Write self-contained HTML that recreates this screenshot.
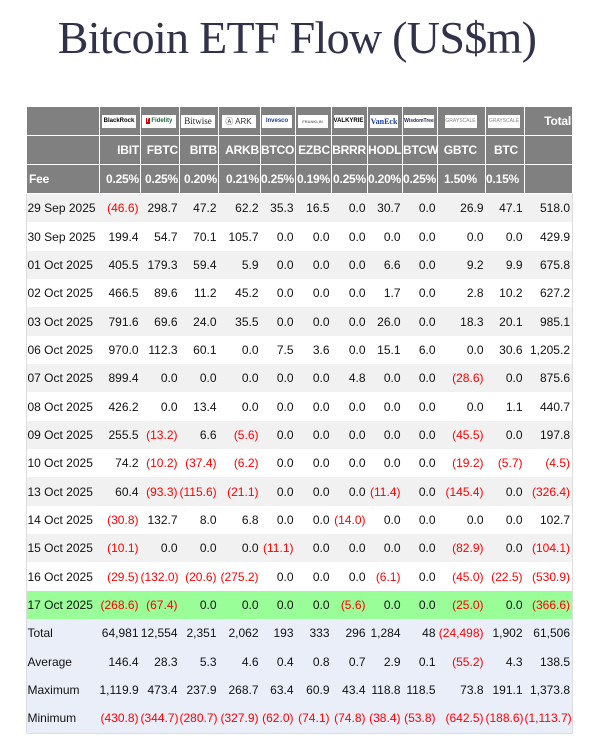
<!DOCTYPE html>
<html><head><meta charset="utf-8"><style>
body{margin:0;background:#fff;width:612px;height:750px;overflow:hidden;position:relative;font-family:"Liberation Sans",Arial,sans-serif}
h1{position:absolute;left:-9px;width:612px;top:12px;margin:0;text-align:center;font:46px/52px "Liberation Serif",serif;color:#30324a;letter-spacing:-0.7px}
table{position:absolute;left:26px;top:106px;border-collapse:collapse;table-layout:fixed;width:546px;font-size:12px;color:#111}
td{padding:0 2px 0 0;text-align:right;white-space:nowrap;overflow:hidden}
tr.h td{background:#808080;color:#fff;font-weight:bold;font-size:12px;letter-spacing:-0.2px;border:1px solid #fff;text-align:right;padding-right:1px;overflow:visible}
tr.h1 td{height:28px}
tr.h2 td,tr.h3 td{height:28px}
tr.h td:first-child{text-align:left;padding-left:2px}
tr.d td{height:28.35px}
tr.d td:first-child{text-align:left;padding-left:1px}
tr.g td{background:#f1f1f1}
tr.w td{background:#fff}
tr.gr td{background:#99fd98}
tr.s td{background:#e9eef8}
td:last-child{border-right:1px solid #ddd}
.n{color:#f00}
.lg{display:inline-block;background:#fff;color:#333;font-size:6px;font-weight:bold;width:34px;height:13px;line-height:13px;text-align:center;vertical-align:middle;margin-right:2px;letter-spacing:0;overflow:hidden}
tr.h1 td.c{text-align:center;padding:0}
.bot td{border-bottom:1px solid #ddd}
</style></head><body>
<h1>Bitcoin ETF Flow (US$m)</h1>
<table>
<colgroup><col style="width:73px"><col style="width:41px"><col style="width:39px"><col style="width:39px"><col style="width:42px"><col style="width:35px"><col style="width:36px"><col style="width:36px"><col style="width:35px"><col style="width:35px"><col style="width:48px"><col style="width:39px"><col style="width:48px"></colgroup>
<tr class="h h1"><td></td><td class="c"><span class="lg" style="color:#000">BlackRock</span></td><td class="c"><span class="lg" style="color:#1a6a3a"><b style="background:#c00;color:#fff;padding:0 1px">f</b> Fidelity</span></td><td class="c"><span class="lg" style="font-family:'Liberation Serif';font-size:9px;font-weight:normal;color:#222">Bitwise</span></td><td class="c"><span class="lg" style="font-size:8px;font-weight:normal">Ⓐ ARK</span></td><td class="c"><span class="lg" style="color:#1c3f94;width:30px">Invesco</span></td><td class="c"><span class="lg" style="width:30px;color:#777;font-size:4px">FRANKLIN</span></td><td class="c"><span class="lg" style="width:30px;color:#000">VALKYRIE</span></td><td class="c"><span class="lg" style="width:28px;color:#1c3f94;font-family:'Liberation Serif';font-size:8px">VanEck</span></td><td class="c"><span class="lg" style="width:30px;color:#2b2a5a;font-size:5px">WisdomTree</span></td><td class="c"><span class="lg" style="width:32px;color:#888;font-size:5px;font-weight:normal">GRAYSCALE</span></td><td class="c"><span class="lg" style="width:32px;color:#888;font-size:5px;font-weight:normal">GRAYSCALE</span></td><td>Total</td></tr>
<tr class="h h2"><td></td><td>IBIT</td><td>FBTC</td><td>BITB</td><td>ARKB</td><td>BTCO</td><td>EZBC</td><td>BRRR</td><td>HODL</td><td>BTCW</td><td style="padding-right:8px">GBTC</td><td style="padding-right:6px">BTC</td><td></td></tr>
<tr class="h h3"><td>Fee</td><td>0.25%</td><td>0.25%</td><td>0.20%</td><td>0.21%</td><td>0.25%</td><td>0.19%</td><td>0.25%</td><td>0.20%</td><td>0.25%</td><td style="padding-right:8px">1.50%</td><td style="padding-right:6px">0.15%</td><td></td></tr>
<tr class="d g"><td>29 Sep 2025</td><td class="n">(46.6)</td><td>298.7</td><td>47.2</td><td>62.2</td><td>35.3</td><td>16.5</td><td>0.0</td><td>30.7</td><td>0.0</td><td>26.9</td><td>47.1</td><td>518.0</td></tr>
<tr class="d w"><td>30 Sep 2025</td><td>199.4</td><td>54.7</td><td>70.1</td><td>105.7</td><td>0.0</td><td>0.0</td><td>0.0</td><td>0.0</td><td>0.0</td><td>0.0</td><td>0.0</td><td>429.9</td></tr>
<tr class="d g"><td>01 Oct 2025</td><td>405.5</td><td>179.3</td><td>59.4</td><td>5.9</td><td>0.0</td><td>0.0</td><td>0.0</td><td>6.6</td><td>0.0</td><td>9.2</td><td>9.9</td><td>675.8</td></tr>
<tr class="d w"><td>02 Oct 2025</td><td>466.5</td><td>89.6</td><td>11.2</td><td>45.2</td><td>0.0</td><td>0.0</td><td>0.0</td><td>1.7</td><td>0.0</td><td>2.8</td><td>10.2</td><td>627.2</td></tr>
<tr class="d g"><td>03 Oct 2025</td><td>791.6</td><td>69.6</td><td>24.0</td><td>35.5</td><td>0.0</td><td>0.0</td><td>0.0</td><td>26.0</td><td>0.0</td><td>18.3</td><td>20.1</td><td>985.1</td></tr>
<tr class="d w"><td>06 Oct 2025</td><td>970.0</td><td>112.3</td><td>60.1</td><td>0.0</td><td>7.5</td><td>3.6</td><td>0.0</td><td>15.1</td><td>6.0</td><td>0.0</td><td>30.6</td><td>1,205.2</td></tr>
<tr class="d g"><td>07 Oct 2025</td><td>899.4</td><td>0.0</td><td>0.0</td><td>0.0</td><td>0.0</td><td>0.0</td><td>4.8</td><td>0.0</td><td>0.0</td><td class="n">(28.6)</td><td>0.0</td><td>875.6</td></tr>
<tr class="d w"><td>08 Oct 2025</td><td>426.2</td><td>0.0</td><td>13.4</td><td>0.0</td><td>0.0</td><td>0.0</td><td>0.0</td><td>0.0</td><td>0.0</td><td>0.0</td><td>1.1</td><td>440.7</td></tr>
<tr class="d g"><td>09 Oct 2025</td><td>255.5</td><td class="n">(13.2)</td><td>6.6</td><td class="n">(5.6)</td><td>0.0</td><td>0.0</td><td>0.0</td><td>0.0</td><td>0.0</td><td class="n">(45.5)</td><td>0.0</td><td>197.8</td></tr>
<tr class="d w"><td>10 Oct 2025</td><td>74.2</td><td class="n">(10.2)</td><td class="n">(37.4)</td><td class="n">(6.2)</td><td>0.0</td><td>0.0</td><td>0.0</td><td>0.0</td><td>0.0</td><td class="n">(19.2)</td><td class="n">(5.7)</td><td class="n">(4.5)</td></tr>
<tr class="d g"><td>13 Oct 2025</td><td>60.4</td><td class="n">(93.3)</td><td class="n">(115.6)</td><td class="n">(21.1)</td><td>0.0</td><td>0.0</td><td>0.0</td><td class="n">(11.4)</td><td>0.0</td><td class="n">(145.4)</td><td>0.0</td><td class="n">(326.4)</td></tr>
<tr class="d w"><td>14 Oct 2025</td><td class="n">(30.8)</td><td>132.7</td><td>8.0</td><td>6.8</td><td>0.0</td><td>0.0</td><td class="n">(14.0)</td><td>0.0</td><td>0.0</td><td>0.0</td><td>0.0</td><td>102.7</td></tr>
<tr class="d g"><td>15 Oct 2025</td><td class="n">(10.1)</td><td>0.0</td><td>0.0</td><td>0.0</td><td class="n">(11.1)</td><td>0.0</td><td>0.0</td><td>0.0</td><td>0.0</td><td class="n">(82.9)</td><td>0.0</td><td class="n">(104.1)</td></tr>
<tr class="d w"><td>16 Oct 2025</td><td class="n">(29.5)</td><td class="n">(132.0)</td><td class="n">(20.6)</td><td class="n">(275.2)</td><td>0.0</td><td>0.0</td><td>0.0</td><td class="n">(6.1)</td><td>0.0</td><td class="n">(45.0)</td><td class="n">(22.5)</td><td class="n">(530.9)</td></tr>
<tr class="d gr"><td>17 Oct 2025</td><td class="n">(268.6)</td><td class="n">(67.4)</td><td>0.0</td><td>0.0</td><td>0.0</td><td>0.0</td><td class="n">(5.6)</td><td>0.0</td><td>0.0</td><td class="n">(25.0)</td><td>0.0</td><td class="n">(366.6)</td></tr>
<tr class="d s"><td>Total</td><td>64,981</td><td>12,554</td><td>2,351</td><td>2,062</td><td>193</td><td>333</td><td>296</td><td>1,284</td><td>48</td><td class="n">(24,498)</td><td>1,902</td><td>61,506</td></tr>
<tr class="d s"><td>Average</td><td>146.4</td><td>28.3</td><td>5.3</td><td>4.6</td><td>0.4</td><td>0.8</td><td>0.7</td><td>2.9</td><td>0.1</td><td class="n">(55.2)</td><td>4.3</td><td>138.5</td></tr>
<tr class="d s"><td>Maximum</td><td>1,119.9</td><td>473.4</td><td>237.9</td><td>268.7</td><td>63.4</td><td>60.9</td><td>43.4</td><td>118.8</td><td>118.5</td><td>73.8</td><td>191.1</td><td>1,373.8</td></tr>
<tr class="d s bot"><td>Minimum</td><td class="n">(430.8)</td><td class="n">(344.7)</td><td class="n">(280.7)</td><td class="n">(327.9)</td><td class="n">(62.0)</td><td class="n">(74.1)</td><td class="n">(74.8)</td><td class="n">(38.4)</td><td class="n">(53.8)</td><td class="n">(642.5)</td><td class="n">(188.6)</td><td class="n">(1,113.7)</td></tr>
</table>
<div style="position:absolute;left:26px;top:194px;width:1px;height:539px;background:#ddd"></div>
</body></html>
